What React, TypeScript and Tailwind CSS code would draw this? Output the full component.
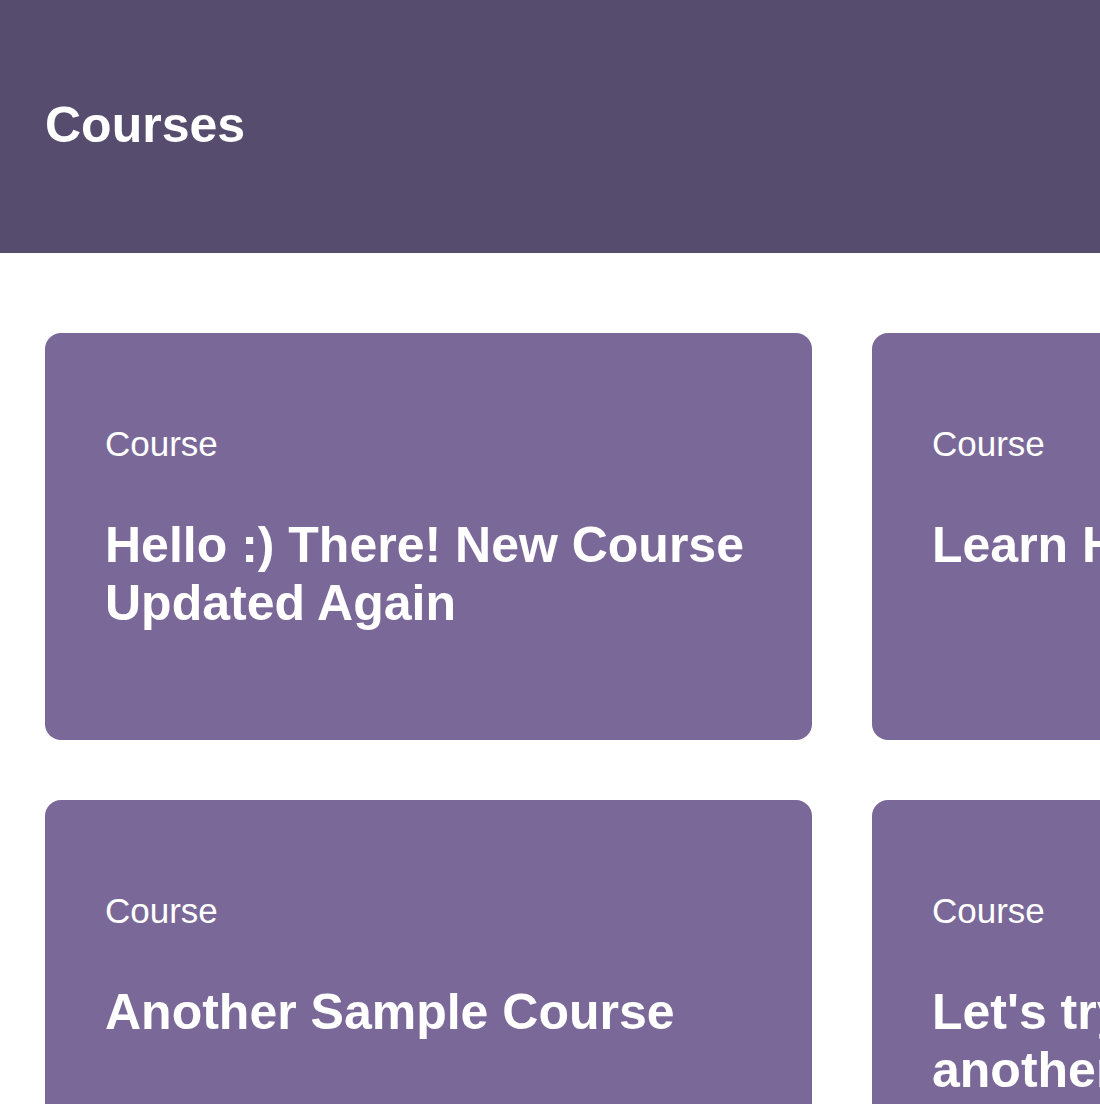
const courses = [
  { title: "Hello :) There! New Course Updated Again" },
  { title: "Learn HTML Basics" },
  { title: "Another Sample Course" },
  { title: "Let's try creating yet another course" },
];

function CourseCard({ title }: { title: string }) {
  return (
    <div className="h-[407px] rounded-[16px] bg-[#7a6998] pl-[60px] pr-[40px] pt-[91px] text-white">
      <p className="text-[35px] leading-[40px]">Course</p>
      <h2 className="mt-[52px] text-[50px] font-bold leading-[58px]">{title}</h2>
    </div>
  );
}

export default function App() {
  return (
    <div className="h-[1104px] w-[1100px] overflow-hidden bg-white font-['Liberation_Sans',Arial,sans-serif]">
      {/* Header */}
      <header className="h-[253px] bg-[#564c6e] pl-[45px] pt-[95px]">
        <h1 className="text-[50px] font-bold leading-[60px] text-white">Courses</h1>
      </header>

      {/* Course grid */}
      <main className="px-[45px] pt-[80px]">
        <div className="grid w-max grid-cols-[767px_767px] gap-[60px]">
          {courses.map((c) => (
            <CourseCard key={c.title} title={c.title} />
          ))}
        </div>
      </main>
    </div>
  );
}
